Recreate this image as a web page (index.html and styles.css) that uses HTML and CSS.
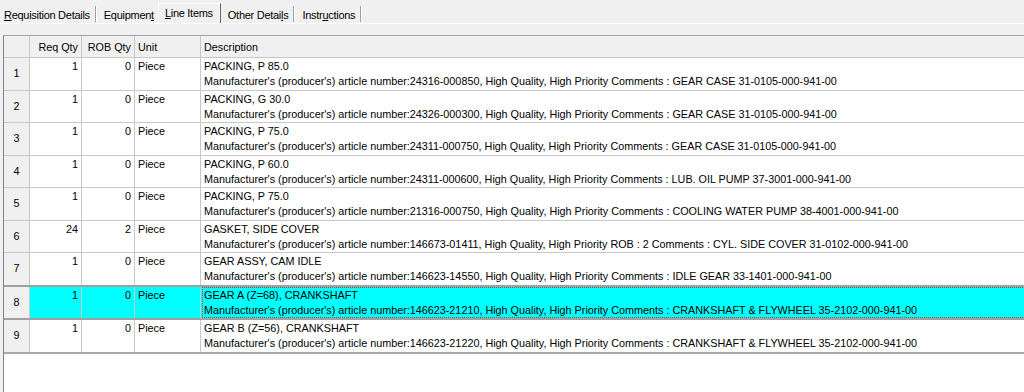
FILE: index.html
```html
<!DOCTYPE html>
<html lang="en">
<head>
    <meta charset="UTF-8">
    <title>Line Items</title>
    <link rel="stylesheet" href="styles.css">
</head>
<body>
    <div class="tabs">
        <span class="tab first"><u>R</u>equisition Details</span>
        <span class="tab before-active">Equipmen<u>t</u></span>
        <span class="tab active"><u>L</u>ine Items</span>
        <span class="tab">Other Detai<u>l</u>s</span>
        <span class="tab">Instr<u>u</u>ctions</span>
    </div>

    <div class="grid-wrap">
        <table class="grid">
            <thead>
                <tr>
                    <th class="rowhead"></th>
                    <th class="num">Req Qty</th>
                    <th class="num">ROB Qty</th>
                    <th>Unit</th>
                    <th>Description</th>
                </tr>
            </thead>
            <tbody>
                <tr>
                    <td class="rowhead">1</td><td class="num">1</td><td class="num">0</td><td>Piece</td>
                    <td>PACKING, P 85.0<br>Manufacturer's (producer's) article number:24316-000850, High Quality, High Priority Comments : GEAR CASE 31-0105-000-941-00</td>
                </tr>
                <tr>
                    <td class="rowhead">2</td><td class="num">1</td><td class="num">0</td><td>Piece</td>
                    <td>PACKING, G 30.0<br>Manufacturer's (producer's) article number:24326-000300, High Quality, High Priority Comments : GEAR CASE 31-0105-000-941-00</td>
                </tr>
                <tr>
                    <td class="rowhead">3</td><td class="num">1</td><td class="num">0</td><td>Piece</td>
                    <td>PACKING, P 75.0<br>Manufacturer's (producer's) article number:24311-000750, High Quality, High Priority Comments : GEAR CASE 31-0105-000-941-00</td>
                </tr>
                <tr>
                    <td class="rowhead">4</td><td class="num">1</td><td class="num">0</td><td>Piece</td>
                    <td>PACKING, P 60.0<br>Manufacturer's (producer's) article number:24311-000600, High Quality, High Priority Comments : LUB. OIL PUMP 37-3001-000-941-00</td>
                </tr>
                <tr>
                    <td class="rowhead">5</td><td class="num">1</td><td class="num">0</td><td>Piece</td>
                    <td>PACKING, P 75.0<br>Manufacturer's (producer's) article number:21316-000750, High Quality, High Priority Comments : COOLING WATER PUMP 38-4001-000-941-00</td>
                </tr>
                <tr>
                    <td class="rowhead">6</td><td class="num">24</td><td class="num">2</td><td>Piece</td>
                    <td>GASKET, SIDE COVER<br>Manufacturer's (producer's) article number:146673-01411, High Quality, High Priority ROB : 2 Comments : CYL. SIDE COVER 31-0102-000-941-00</td>
                </tr>
                <tr>
                    <td class="rowhead">7</td><td class="num">1</td><td class="num">0</td><td>Piece</td>
                    <td>GEAR ASSY, CAM IDLE<br>Manufacturer's (producer's) article number:146623-14550, High Quality, High Priority Comments : IDLE GEAR 33-1401-000-941-00</td>
                </tr>
                <tr class="selected">
                    <td class="rowhead">8</td><td class="num">1</td><td class="num">0</td><td>Piece</td>
                    <td class="focus">GEAR A (Z=68), CRANKSHAFT<br>Manufacturer's (producer's) article number:146623-21210, High Quality, High Priority Comments : CRANKSHAFT &amp; FLYWHEEL 35-2102-000-941-00</td>
                </tr>
                <tr class="last">
                    <td class="rowhead">9</td><td class="num">1</td><td class="num">0</td><td>Piece</td>
                    <td>GEAR B (Z=56), CRANKSHAFT<br>Manufacturer's (producer's) article number:146623-21220, High Quality, High Priority Comments : CRANKSHAFT &amp; FLYWHEEL 35-2102-000-941-00</td>
                </tr>
            </tbody>
        </table>
    </div>
</body>
</html>
```

FILE: styles.css
```css
html, body {
    height: 100%;
}
body {
    margin: 0;
    background-color: #f0f0f0;
    font-family: "Liberation Sans", Arial, sans-serif;
    font-size: 11px;
    color: #000;
    display: flex;
    flex-direction: column;
    overflow: hidden;
}

/* tab strip */
.tabs {
    display: flex;
    align-items: flex-end;
    height: 23px;
    border-bottom: 1px solid #fff;
}
.tab {
    height: 16px;
    line-height: 18px;
    padding: 0 5px 0 7px;
    margin-bottom: 1px;
    border-right: 1px solid #a0a0a0;
    box-shadow: 1px 0 0 #fff;
    margin-right: 1px;
    letter-spacing: -0.28px;
    white-space: nowrap;
}
.tab.first {
    padding-left: 4px;
}
.tab.before-active {
    border-right: none;
    box-shadow: none;
    padding-right: 3px;
}
.tab u {
    text-decoration-thickness: 1px;
    text-underline-offset: 1px;
}
.tab.active {
    height: 19px;
    line-height: 18px;
    margin: 0;
    padding: 0 7px 0 6px;
    border-top: 1px solid #fff;
    border-left: 1px solid #fff;
    border-right: 1px solid #696969;
    box-shadow: none;
}

/* grid */
.grid-wrap {
    flex: 1;
    margin: 11px 0 0 3px;
    background: #fff;
    border-top: 1px solid #a0a0a0;
    border-left: 1px solid #828282;
}
.grid {
    border-collapse: collapse;
    width: 1100px;
    table-layout: fixed;
    font-size: 10.8px;
}
.grid th, .grid td {
    border: 1px solid #c8c8c8;
    padding: 0 3px;
    text-align: left;
    vertical-align: top;
    white-space: nowrap;
    overflow: hidden;
}
.grid tr > :first-child {
    border-left: none;
}
.grid thead tr > * {
    border-top: none;
}
.grid th {
    background: #f0f0f0;
    font-weight: normal;
    height: 21px;
    vertical-align: middle;
}
.grid td {
    height: 30.5px;
    line-height: 15px;
    padding-top: 1px;
    padding-bottom: 0;
}
.grid .num {
    text-align: right;
}
.grid th:nth-child(1) { width: 19px; }
.grid th:nth-child(2) { width: 45px; }
.grid th:nth-child(3) { width: 46px; }
.grid th:nth-child(4) { width: 59px; }

.grid td.rowhead {
    background: #f0f0f0;
    text-align: center;
    vertical-align: middle;
    padding: 0;
}

.grid tr.selected td {
    background: #00ffff;
    border-top: 2px solid #a0a0a0;
    border-bottom: 2px solid #a0a0a0;
}
.grid tr.selected td.rowhead {
    background: #f0f0f0;
}
.grid td.focus {
    outline: 1px dotted #b04040;
    outline-offset: -2px;
}
.grid tr.last td {
    border-bottom: 2px solid #a8a8a8;
}
```
